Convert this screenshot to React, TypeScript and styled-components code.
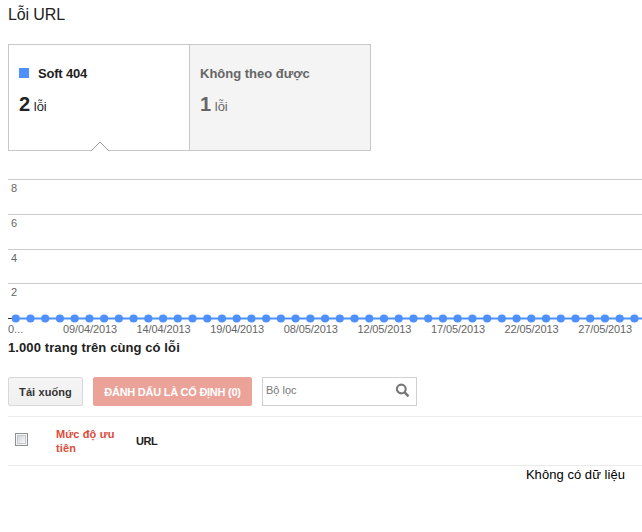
import React from 'react';
import styled, { createGlobalStyle } from 'styled-components';

const GlobalStyle = createGlobalStyle`
  * { box-sizing: border-box; }
  body {
    margin: 0;
    background: #fff;
    color: #222;
    font-family: "Liberation Sans", Arial, sans-serif;
    overflow: hidden;
  }
`;

const Page = styled.main`
  display: flex;
  flex-direction: column;
  width: 642px;
  height: 532px;
  padding-left: 8px;
  overflow: hidden;
`;

const Title = styled.h1`
  margin: 0;
  height: 44px;
  padding-top: 5px;
  font-size: 16px;
  line-height: 20px;
  font-weight: 400;
  letter-spacing: -0.12px;
`;

const Tabs = styled.div`
  display: flex;
  width: 363px;
  height: 107px;
  flex: none;
  border: 1px solid #c8c8c8;
`;

const Tab = styled.div<{ $active?: boolean }>`
  position: relative;
  width: ${p => (p.$active ? 181 : 180)}px;
  padding: 19px 10px 0;
  background: ${p => (p.$active ? '#fff' : '#f4f4f4')};
  color: ${p => (p.$active ? '#222' : '#666')};
  border-right: ${p => (p.$active ? '1px solid #c8c8c8' : '0')};
`;

const TabName = styled.div<{ $tight?: boolean }>`
  display: flex;
  align-items: center;
  gap: 9px;
  height: 18px;
  font-size: 13px;
  font-weight: 700;
  letter-spacing: ${p => (p.$tight ? '-0.2px' : '0')};
  white-space: nowrap;
`;

const Swatch = styled.span`
  width: 10px;
  height: 10px;
  background: #4d90fe;
`;

const TabCount = styled.div`
  margin-top: 9px;
  font-size: 13px;
  line-height: 26px;
`;

const Count = styled.strong`
  font-size: 20px;
`;

const Pointer = styled.svg`
  position: absolute;
  left: 81px;
  bottom: -1px;
`;

const Chart = styled.svg`
  display: block;
  flex: none;
  margin-top: 21px;
  font-family: "Liberation Sans", Arial, sans-serif;
  font-size: 11px;
  fill: #666;
`;

const Heading = styled.h2`
  margin: 0;
  height: 38px;
  padding-top: 1px;
  font-size: 13px;
  line-height: 16px;
  font-weight: 700;
  letter-spacing: 0.1px;
`;

const Toolbar = styled.div`
  display: flex;
  gap: 10px;
  height: 29px;
`;

const Button = styled.button<{ $danger?: boolean }>`
  width: ${p => (p.$danger ? 159 : 75)}px;
  height: 29px;
  padding: 1px 0 0;
  border: 1px solid ${p => (p.$danger ? '#eba399' : '#d8d8d8')};
  border-radius: 2px;
  background: ${p => (p.$danger ? '#eba399' : 'linear-gradient(#f5f5f5, #f0f0f0)')};
  color: ${p => (p.$danger ? '#fff' : '#333')};
  font: 700 11px/27px "Liberation Sans", Arial, sans-serif;
  letter-spacing: ${p => (p.$danger ? '-0.26px' : '0.1px')};
  white-space: nowrap;
`;

const Search = styled.label`
  display: flex;
  align-items: center;
  width: 155px;
  height: 29px;
  border: 1px solid #d0d0d0;
  padding: 0 6px 3px 3px;
`;

const SearchInput = styled.input`
  flex: 1;
  min-width: 0;
  padding: 0;
  border: 0;
  outline: 0;
  background: transparent;
  font: 11px/16px "Liberation Sans", Arial, sans-serif;
  &::placeholder { color: #777; opacity: 1; }
`;

const TableHead = styled.div`
  display: grid;
  grid-template-columns: 48px 80px 1fr;
  align-items: center;
  height: 50px;
  margin-top: 10px;
  border-top: 1px solid #ebebeb;
  border-bottom: 1px solid #ebebeb;
  font-size: 11px;
  line-height: 14px;
  font-weight: 700;
`;

const CheckBox = styled.span`
  width: 13px;
  height: 13px;
  margin: -3px 0 0 7px;
  border: 1px solid #8e8f8f;
  background: linear-gradient(135deg, #c4c9cf, #f4f4f4 75%);
  box-shadow: inset 0 0 0 1px #f4f4f4, inset 0 0 0 2px #c5c8cc;
`;

const Priority = styled.span`
  width: 65px;
  color: #dd4b39;
  letter-spacing: 0.12px;
`;

const UrlColumn = styled.span`
  letter-spacing: -0.5px;
`;

const Empty = styled.div`
  padding-right: 17px;
  text-align: right;
  color: #000;
  font-size: 13px;
  line-height: 18px;
  letter-spacing: 0.05px;
`;

const gridLines = [
  { y: 7.5, label: '8' },
  { y: 42.5, label: '6' },
  { y: 77.5, label: '4' },
  { y: 111.5, label: '2' },
];
const dates = ['09/04/2013', '14/04/2013', '19/04/2013', '08/05/2013', '12/05/2013', '17/05/2013', '22/05/2013', '27/05/2013'];
const dots = Array.from({ length: 43 }, (_, i) => 7.75 + i * 14.73);

export default function App() {
  return (
    <Page>
      <GlobalStyle />
      <Title>Lỗi URL</Title>
      <Tabs>
        <Tab $active>
          <TabName $tight><Swatch />Soft 404</TabName>
          <TabCount><Count>2</Count> lỗi</TabCount>
          <Pointer width="20" height="11" viewBox="0 0 20 11">
            <path d="M1 11 L10 2 L19 11Z" fill="#fff" />
            <path d="M1 11 L10 2 L19 11" fill="none" stroke="#999" />
          </Pointer>
        </Tab>
        <Tab>
          <TabName>Không theo được</TabName>
          <TabCount><Count>1</Count> lỗi</TabCount>
        </Tab>
      </Tabs>
      <Chart width="634" height="167" viewBox="0 0 634 167">
        {gridLines.map(line => (
          <g key={line.label}>
            <path d={`M0 ${line.y}H634`} stroke="#ccc" />
            <text x="3" y={line.y + 12.5}>{line.label}</text>
          </g>
        ))}
        <path d="M0 146.5H8" stroke="#333" />
        <path d="M7.75 146.5H634" stroke="#4d90fe" strokeWidth="2" />
        {dots.map(x => <circle key={x} cx={x} cy="146.5" r="4.1" fill="#4d90fe" />)}
        <text x="0" y="161">0...</text>
        {dates.map((date, i) => (
          <text key={date} x={82 + i * 73.6} y="161" textAnchor="middle" textLength="54">{date}</text>
        ))}
      </Chart>
      <Heading>1.000 trang trên cùng có lỗi</Heading>
      <Toolbar>
        <Button>Tải xuống</Button>
        <Button $danger>ĐÁNH DẤU LÀ CỐ ĐỊNH (0)</Button>
        <Search>
          <SearchInput placeholder="Bộ lọc" />
          <svg width="15" height="15" viewBox="0 0 15 15" fill="none" stroke="#777">
            <circle cx="6.3" cy="6" r="4.4" strokeWidth="2.1" />
            <path d="M9.4 9.2L13.5 13.3" strokeWidth="2.5" />
          </svg>
        </Search>
      </Toolbar>
      <TableHead>
        <CheckBox />
        <Priority>Mức độ ưu tiên</Priority>
        <UrlColumn>URL</UrlColumn>
      </TableHead>
      <Empty>Không có dữ liệu</Empty>
    </Page>
  );
}
